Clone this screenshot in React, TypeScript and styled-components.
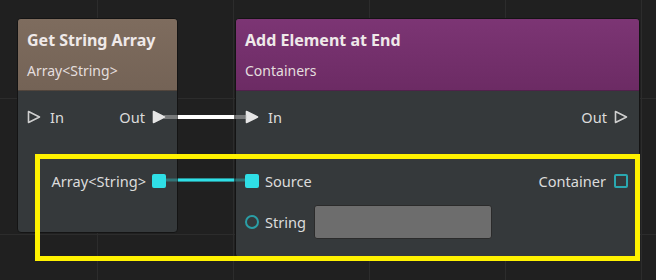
import React from 'react';
import styled, { createGlobalStyle } from 'styled-components';

const GlobalStyle = createGlobalStyle`
    html, body {
        margin: 0;
        padding: 0;
        background: #202020;
    }
    body {
        font-family: "Noto Sans", "Open Sans", sans-serif;
    }
`;

const Canvas = styled.div`
    position: relative;
    width: 656px;
    height: 280px;
    overflow: hidden;
    background-color: #202020;
    background-image:
        linear-gradient(to right, #2c2c2c 1px, transparent 1px),
        linear-gradient(to bottom, #2c2c2c 1px, transparent 1px);
    background-size: 136px 136px;
    background-position: 97px 98px;
`;

interface NodeProps {
    $left: number;
    $top: number;
    $width: number;
    $height: number;
}

const Node = styled.div<NodeProps>`
    position: absolute;
    left: ${(p: NodeProps) => p.$left}px;
    top: ${(p: NodeProps) => p.$top}px;
    width: ${(p: NodeProps) => p.$width}px;
    height: ${(p: NodeProps) => p.$height}px;
    box-sizing: border-box;
    display: flex;
    flex-direction: column;
    background: rgba(54, 58, 60, 0.97);
    border: 1px solid #141414;
    border-radius: 4px;
    overflow: hidden;
`;

interface HeaderProps {
    $from: string;
    $to: string;
}

const Header = styled.div<HeaderProps>`
    height: 72px;
    box-sizing: border-box;
    padding: 10px 9px 0;
    background: linear-gradient(to bottom, ${(p: HeaderProps) => p.$from}, ${(p: HeaderProps) => p.$to});
    border-bottom: 1px solid rgba(0, 0, 0, 0.35);
    display: flex;
    flex-direction: column;
    gap: 10px;
`;

const Title = styled.div`
    font-size: 16px;
    line-height: 22px;
    font-weight: 700;
    color: #efe9e9;
    white-space: nowrap;
`;

const Subtitle = styled.div`
    font-size: 14px;
    line-height: 20px;
    color: #e4dede;
    white-space: nowrap;
`;

const Body = styled.div`
    display: flex;
    flex-direction: column;
    padding: 14px 11px 0 9px;
`;

interface RowProps {
    $gap?: number;
    $height?: number;
}

const Row = styled.div<RowProps>`
    display: flex;
    align-items: center;
    justify-content: space-between;
    height: ${(p: RowProps) => p.$height ?? 24}px;
    margin-top: ${(p: RowProps) => p.$gap ?? 0}px;
`;

interface PinProps {
    $gap?: number;
}

const Pin = styled.div<PinProps>`
    display: flex;
    align-items: center;
    gap: ${(p: PinProps) => p.$gap ?? 6}px;
    font-size: 14.6px;
    color: #dcdcdc;
    white-space: nowrap;
`;

const Label = styled.span`
    line-height: 20px;
`;

const DataSquare = styled.span<{ $filled?: boolean }>`
    width: 14px;
    height: 14px;
    box-sizing: border-box;
    border-radius: 2px;
    background: ${(p: { $filled?: boolean }) => (p.$filled ? '#2fdfe6' : 'transparent')};
    border: 2px solid ${(p: { $filled?: boolean }) => (p.$filled ? '#2fdfe6' : '#2aa8b0')};
`;

const DataCircle = styled.span`
    width: 14px;
    height: 14px;
    box-sizing: border-box;
    border-radius: 50%;
    border: 2px solid #2a9ea6;
`;

const TextField = styled.div`
    width: 178px;
    height: 34px;
    box-sizing: border-box;
    margin-left: 2px;
    background: #6d6d6d;
    border: 1px solid #2b2b2b;
    border-radius: 3px;
`;

const Highlight = styled.div`
    position: absolute;
    left: 35px;
    top: 154px;
    width: 605px;
    height: 107px;
    box-sizing: border-box;
    border: 5px solid #fff200;
    pointer-events: none;
`;

const Wires = styled.svg`
    position: absolute;
    left: 0;
    top: 0;
    pointer-events: none;
`;

const ExecArrow: React.FC<{ filled?: boolean }> = ({ filled }) => (
    <svg width="14" height="14" viewBox="0 0 14 14">
        <path
            d="M1.5 1.5 L12.5 7 L1.5 12.5 Z"
            fill={filled ? '#e6e6e6' : 'none'}
            stroke={filled ? '#e6e6e6' : '#cfcfcf'}
            strokeWidth="1.6"
            strokeLinejoin="round"
        />
    </svg>
);

export default function App() {
    return (
        <Canvas>
            <GlobalStyle />

            <Node $left={17} $top={18} $width={161} $height={215}>
                <Header $from="#7e6c5e" $to="#746356">
                    <Title>Get String Array</Title>
                    <Subtitle>Array&lt;String&gt;</Subtitle>
                </Header>
                <Body>
                    <Row>
                        <Pin $gap={9}>
                            <ExecArrow />
                            <Label>In</Label>
                        </Pin>
                        <Pin $gap={7}>
                            <Label>Out</Label>
                            <ExecArrow filled />
                        </Pin>
                    </Row>
                    <Row $gap={40}>
                        <span />
                        <Pin>
                            <Label>Array&lt;String&gt;</Label>
                            <DataSquare $filled />
                        </Pin>
                    </Row>
                </Body>
            </Node>

            <Node $left={235} $top={18} $width={405} $height={240}>
                <Header $from="#7c3574" $to="#6c2b64">
                    <Title>Add Element at End</Title>
                    <Subtitle>Containers</Subtitle>
                </Header>
                <Body>
                    <Row>
                        <Pin $gap={9}>
                            <ExecArrow filled />
                            <Label>In</Label>
                        </Pin>
                        <Pin $gap={7}>
                            <Label>Out</Label>
                            <ExecArrow />
                        </Pin>
                    </Row>
                    <Row $gap={40}>
                        <Pin>
                            <DataSquare $filled />
                            <Label>Source</Label>
                        </Pin>
                        <Pin $gap={8}>
                            <Label>Container</Label>
                            <DataSquare />
                        </Pin>
                    </Row>
                    <Row $gap={12} $height={34}>
                        <Pin>
                            <DataCircle />
                            <Label>String</Label>
                            <TextField />
                        </Pin>
                    </Row>
                </Body>
            </Node>

            <Wires width="656" height="280">
                <line x1="164" y1="117" x2="247" y2="117" stroke="rgba(200,200,200,0.45)" strokeWidth="4" />
                <line x1="178" y1="117" x2="234" y2="117" stroke="#ffffff" strokeWidth="4" />
                <line x1="164" y1="180" x2="247" y2="180" stroke="rgba(47,223,230,0.35)" strokeWidth="3" />
                <line x1="178" y1="180" x2="234" y2="180" stroke="#2fdfe6" strokeWidth="3" />
            </Wires>

            <Highlight />
        </Canvas>
    );
}
